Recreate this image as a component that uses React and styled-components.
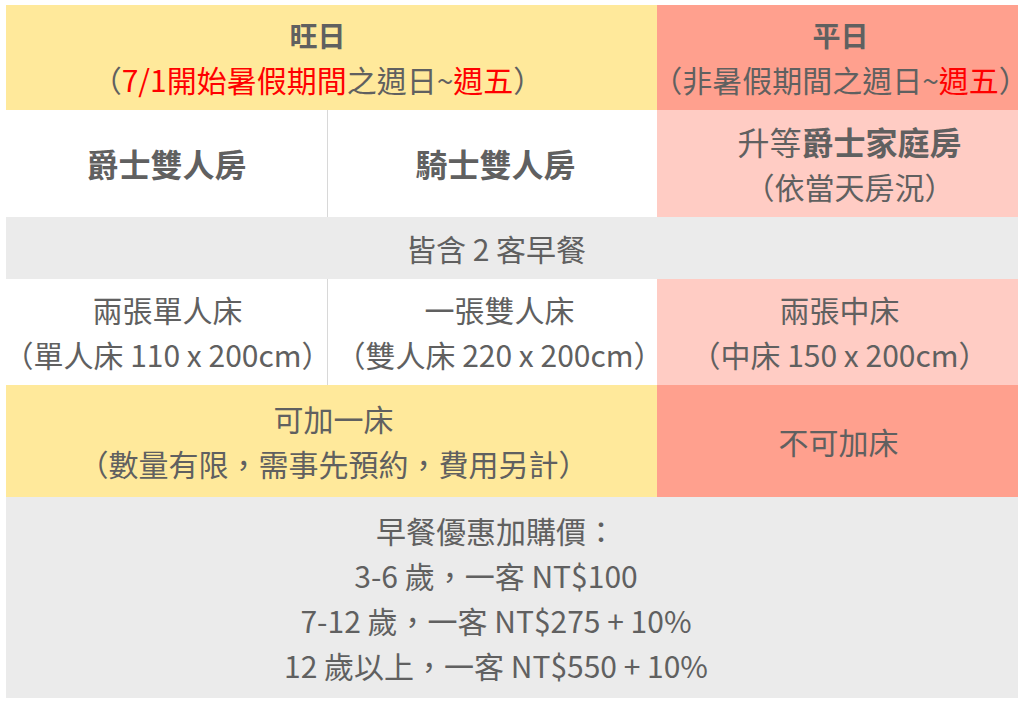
import React from 'react';
import styled, { createGlobalStyle } from 'styled-components';

const GlobalStyle = createGlobalStyle`
  html, body {
    margin: 0;
    padding: 0;
    background: #fff;
  }
  body {
    font-family: "Noto Sans CJK TC", "Noto Sans", sans-serif;
    color: #606060;
  }
`;

const colors = {
  yellow: '#ffe99b',
  red: '#ffa08e',
  pink: '#ffccc4',
  gray: '#ebebeb',
  white: '#ffffff',
};

const Page = styled.div`
  padding: 5px 7px 6px 6px;
`;

const Table = styled.div`
  display: grid;
  grid-template-columns: 322px 329px 361px;
  grid-template-rows: 105px 107px 62px 106px 112px 201px;
  width: 1012px;
`;

// shift nudges the centred text left (negative) or right (positive)
const Cell = styled.div`
  grid-column: ${props => props.span || 'auto'};
  min-width: 0;
  background: ${props => colors[props.tone] || colors.white};
  display: flex;
  flex-direction: column;
  align-items: center;
  justify-content: center;
  text-align: center;
  font-size: 30px;
  line-height: 45px;
  padding: 8px ${props => (props.shift < 0 ? -2 * props.shift : 0)}px 8px
    ${props => (props.shift > 0 ? 2 * props.shift : 0)}px;
  box-sizing: border-box;
  border-right: ${props => (props.divider ? '1px solid #d8d8d8' : 'none')};
  white-space: nowrap;
`;

const HeadTitle = styled.div`
  font-size: 28px;
  font-weight: 700;
  line-height: 44px;
`;

const RoomTitle = styled.div`
  font-size: 32px;
  font-weight: ${props => (props.plain ? 400 : 700)};
`;

const Line = styled.div``;

const Strong = styled.span`
  font-weight: 700;
`;

const Red = styled.span`
  color: #ff0000;
`;

const App = () => (
  <>
    <GlobalStyle />
    <Page>
      <Table>
        <Cell tone="yellow" span="1 / 3" shift={-14}>
          <HeadTitle>旺日</HeadTitle>
          <Line>
            （<Red>7/1開始暑假期間</Red>之週日~<Red>週五</Red>）
          </Line>
        </Cell>
        <Cell tone="red" shift={3}>
          <HeadTitle>平日</HeadTitle>
          <Line>
            （非暑假期間之週日~<Red>週五</Red>）
          </Line>
        </Cell>

        <Cell divider>
          <RoomTitle>爵士雙人房</RoomTitle>
        </Cell>
        <Cell shift={3}>
          <RoomTitle>騎士雙人房</RoomTitle>
        </Cell>
        <Cell tone="pink" shift={12}>
          <RoomTitle plain>
            升等<Strong>爵士家庭房</Strong>
          </RoomTitle>
          <Line>（依當天房況）</Line>
        </Cell>

        <Cell tone="gray" span="1 / 4" shift={-16}>
          <Line>皆含 2 客早餐</Line>
        </Cell>

        <Cell divider shift={1}>
          <Line>兩張單人床</Line>
          <Line>（單人床 110 x 200cm）</Line>
        </Cell>
        <Cell shift={7}>
          <Line>一張雙人床</Line>
          <Line>（雙人床 220 x 200cm）</Line>
        </Cell>
        <Cell tone="pink" shift={2}>
          <Line>兩張中床</Line>
          <Line>（中床 150 x 200cm）</Line>
        </Cell>

        <Cell tone="yellow" span="1 / 3" shift={2}>
          <Line>可加一床</Line>
          <Line>（數量有限，需事先預約，費用另計）</Line>
        </Cell>
        <Cell tone="red" shift={1}>
          <Line>不可加床</Line>
        </Cell>

        <Cell tone="gray" span="1 / 4" shift={-16}>
          <Line>早餐優惠加購價：</Line>
          <Line>3-6 歲，一客 NT$100</Line>
          <Line>7-12 歲，一客 NT$275 + 10%</Line>
          <Line>12 歲以上，一客 NT$550 + 10%</Line>
        </Cell>
      </Table>
    </Page>
  </>
);

export default App;
